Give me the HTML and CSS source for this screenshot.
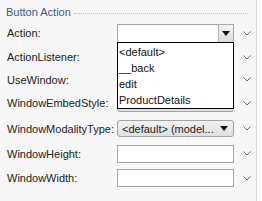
FILE: index.html
```html
<!DOCTYPE html>
<html>
<head>
<meta charset="utf-8">
<link rel="stylesheet" href="styles.css">
</head>
<body>
<div class="page">
  <div class="panel">
    <div class="section-head">
      <span class="section-title">Button Action</span>
      <span class="section-rule"></span>
    </div>
    <div class="form">
      <div class="label">Action:</div>
      <div class="ctl"><div class="combo"><span class="combo-text"></span><span class="combo-btn"><span class="tri"></span></span></div></div>
      <div class="chev"><svg width="8" height="5" viewBox="0 0 8 5"><path d="M0.5 0.5 L4 4 L7.5 0.5" fill="none" stroke="#6d6d6d" stroke-width="1"/></svg></div>

      <div class="label">ActionListener:</div>
      <div class="ctl"><div class="field"></div></div>
      <div class="chev"><svg width="8" height="5" viewBox="0 0 8 5"><path d="M0.5 0.5 L4 4 L7.5 0.5" fill="none" stroke="#6d6d6d" stroke-width="1"/></svg></div>

      <div class="label">UseWindow:</div>
      <div class="ctl"><div class="field"></div></div>
      <div class="chev"><svg width="8" height="5" viewBox="0 0 8 5"><path d="M0.5 0.5 L4 4 L7.5 0.5" fill="none" stroke="#6d6d6d" stroke-width="1"/></svg></div>

      <div class="label">WindowEmbedStyle:</div>
      <div class="ctl"><div class="gcombo"><span class="gcombo-text">&lt;default&gt; (Window)</span><span class="tri"></span></div></div>
      <div class="chev"><svg width="8" height="5" viewBox="0 0 8 5"><path d="M0.5 0.5 L4 4 L7.5 0.5" fill="none" stroke="#6d6d6d" stroke-width="1"/></svg></div>

      <div class="label">WindowModalityType:</div>
      <div class="ctl"><div class="gcombo"><span class="gcombo-text">&lt;default&gt; (model...</span><span class="tri"></span></div></div>
      <div class="chev"><svg width="8" height="5" viewBox="0 0 8 5"><path d="M0.5 0.5 L4 4 L7.5 0.5" fill="none" stroke="#6d6d6d" stroke-width="1"/></svg></div>

      <div class="label">WindowHeight:</div>
      <div class="ctl"><div class="field"></div></div>
      <div class="chev"><svg width="8" height="5" viewBox="0 0 8 5"><path d="M0.5 0.5 L4 4 L7.5 0.5" fill="none" stroke="#6d6d6d" stroke-width="1"/></svg></div>

      <div class="label">WindowWidth:</div>
      <div class="ctl"><div class="field"></div></div>
      <div class="chev"><svg width="8" height="5" viewBox="0 0 8 5"><path d="M0.5 0.5 L4 4 L7.5 0.5" fill="none" stroke="#6d6d6d" stroke-width="1"/></svg></div>
    </div>
    <ul class="list">
      <li>&lt;default&gt;</li>
      <li>__back</li>
      <li>edit</li>
      <li>ProductDetails</li>
    </ul>
  </div>
  <div class="strip"></div>
</div>
</body>
</html>
```
FILE: styles.css
```css
html, body {
  margin: 0;
  padding: 0;
}
body {
  background: #f7f7f7;
  font-family: "Liberation Sans", Arial, sans-serif;
  font-size: 11px;
  color: #222;
  width: 262px;
  height: 201px;
  overflow: hidden;
}
.page {
  display: flex;
  height: 201px;
}
.panel {
  position: relative;
  width: 256px;
  background: #f7f7f7;
}
.strip {
  width: 6px;
  border-left: 1px solid #d6d6d6;
  background: #fbfbfb;
}
.section-head {
  display: flex;
  align-items: center;
  height: 12px;
  padding: 6px 8px 0 6px;
}
.section-title {
  color: #3a5a8c;
  font-size: 11px;
  line-height: 12px;
  margin-right: 3px;
}
.section-rule {
  flex: 1;
  border-top: 1px dotted #c4c4c4;
  margin-top: 2px;
}
.form {
  display: grid;
  grid-template-columns: 117px 117px 22px;
  grid-template-rows: 24px 24px 21px 26px 25px 25px 24px;
  margin-top: 3px;
}
.label {
  display: flex;
  align-items: center;
  padding-left: 7px;
  white-space: nowrap;
}
.ctl {
  display: flex;
  align-items: center;
}
.chev {
  display: flex;
  align-items: center;
  padding-left: 9px;
}
.combo {
  display: flex;
  width: 117px;
  height: 19px;
  box-sizing: border-box;
  border: 1px solid #a7a7a7;
  background: #fff;
}
.combo-text {
  flex: 1;
}
.combo-btn {
  width: 14px;
  border-left: 1px solid #b5b5b5;
  background: linear-gradient(#f4f4f4, #dcdcdc);
  display: flex;
  align-items: center;
  justify-content: center;
}
.tri {
  width: 0;
  height: 0;
  border-left: 4px solid transparent;
  border-right: 4px solid transparent;
  border-top: 5px solid #111;
}
.field {
  width: 117px;
  height: 18px;
  box-sizing: border-box;
  border: 1px solid #a7a7a7;
  background: #fff;
}
.gcombo {
  display: flex;
  align-items: center;
  width: 118px;
  height: 17px;
  box-sizing: border-box;
  border: 1px solid #a3a3a3;
  border-radius: 3px;
  background: linear-gradient(#f2f2f2, #dfdfdf);
  padding: 0 5px 0 4px;
}
.gcombo-text {
  flex: 1;
  white-space: nowrap;
  overflow: hidden;
  color: #222;
}
.list {
  position: absolute;
  left: 117px;
  top: 42px;
  width: 117px;
  box-sizing: border-box;
  margin: 0;
  padding: 1px 0 0 0;
  list-style: none;
  background: #fff;
  border: 1px solid #000;
}
.list li {
  height: 16px;
  line-height: 16px;
  padding-left: 1px;
  color: #111;
}
```
